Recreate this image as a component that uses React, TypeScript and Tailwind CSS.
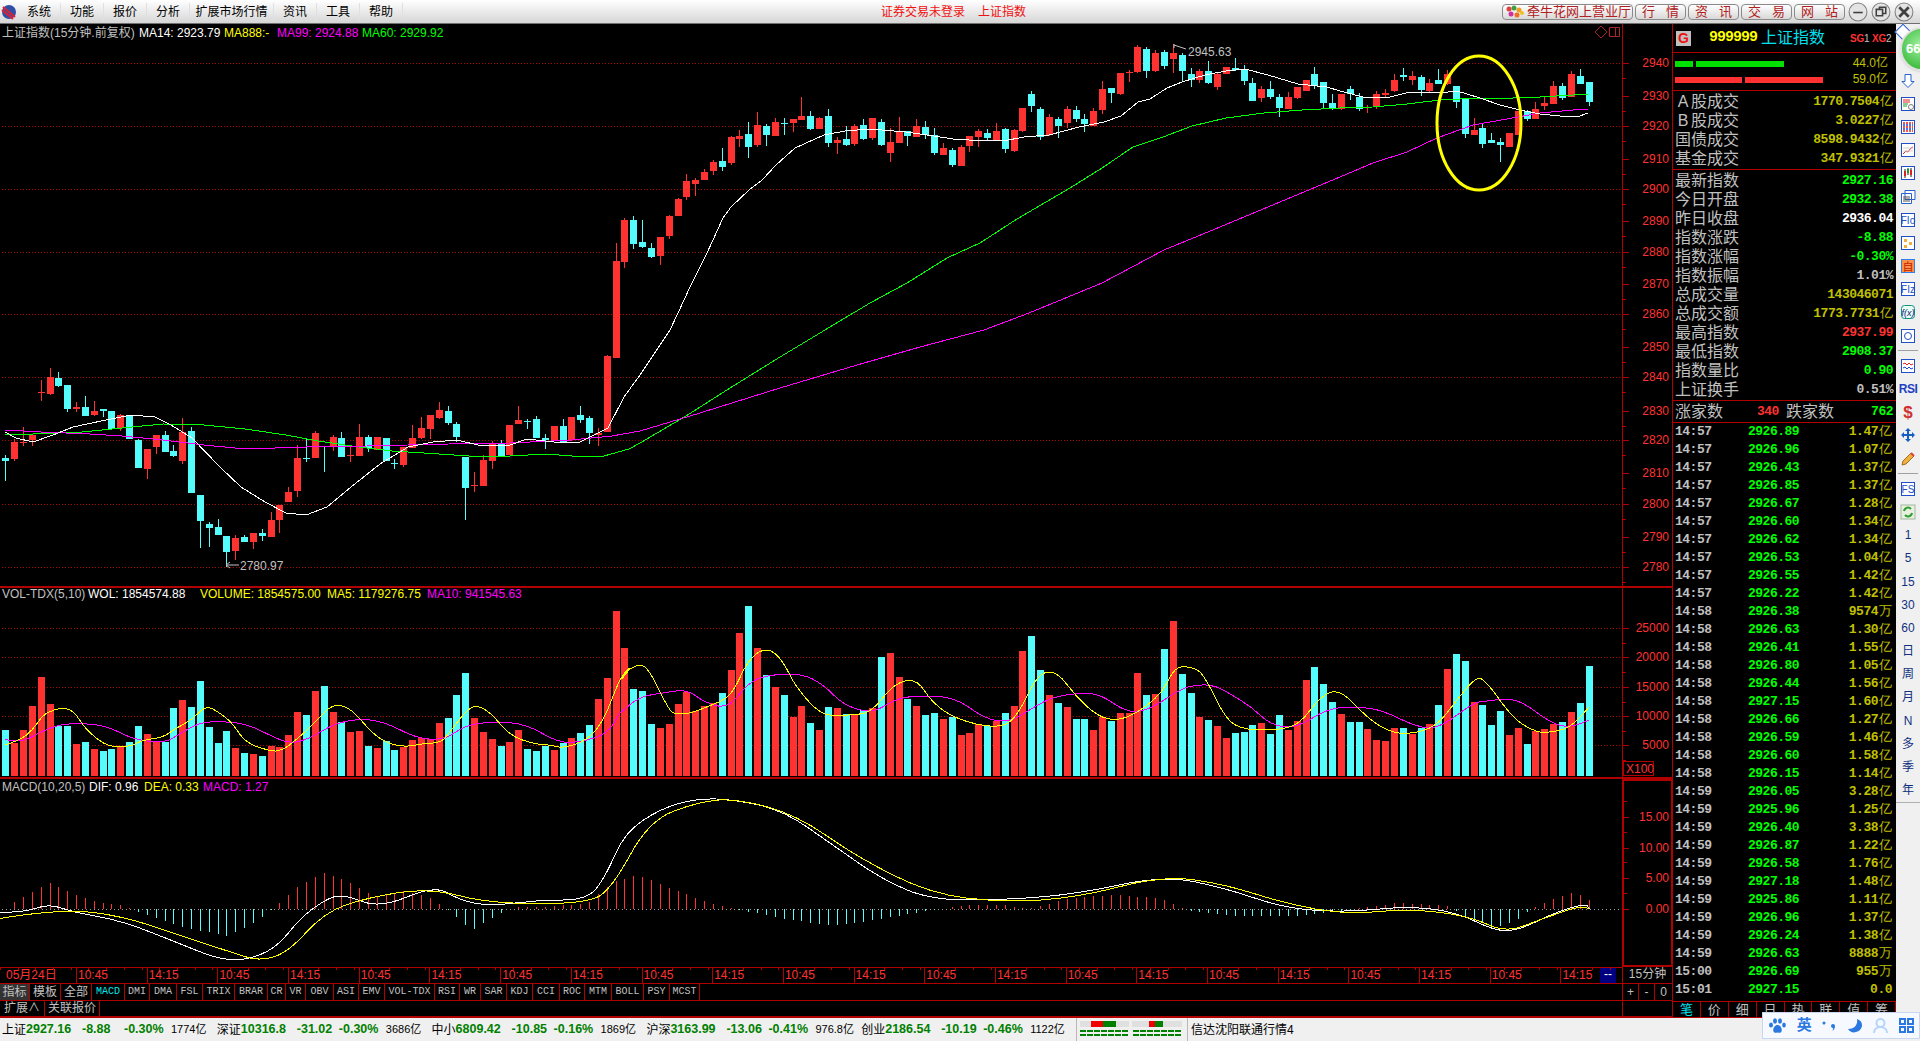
const sans = "font-['Liberation_Sans','Noto_Sans_CJK_SC',sans-serif]";

type Row = number[];
// [red?, bodyTop, bodyBottom, wickTop, wickBottom], measured on crops (y is 3x)
const rows7: Row[] = [
  [0,293,303,285,362],[1,246,297,238,302],[1,245,248,200,258],[1,225,241,222,258],[1,95,98,60,123],[1,51,103,24,105],
  [0,54,78,36,80],[0,75,148,75,156],[1,141,147,126,156],[0,141,168,108,168],[1,153,165,123,168],[0,147,153,147,172],
  [0,153,207,153,210],[1,165,203,162,213],[0,168,237,165,237],[0,240,324,237,324],[1,267,327,267,357],[1,225,261,225,282],
  [0,225,276,213,276],[0,273,288,255,291],[1,216,303,174,312],[0,213,399,201,399],[0,405,483,405,564],[0,492,504,486,561],
  [0,501,525,477,525],[0,528,576,528,621],[1,534,573,525,600],[0,531,546,525,546],[1,519,546,519,567],[0,519,528,507,543],
  [1,480,531,456,531],[1,435,480,435,519],[1,396,426,381,426],[1,294,393,255,411],[0,294,297,234,306],[1,219,294,213,294],
  [0,258,261,258,336],[1,231,258,225,273],[0,234,291,216,291],[1,285,287,255,306],[1,231,288,192,288],[0,231,264,225,276],
  [1,231,270,231,270],[0,234,303,234,303],[0,309,312,297,327],[1,261,315,261,321],[1,234,264,195,264],[1,204,234,171,237],
  [1,165,207,165,237],[1,150,174,126,177],[0,153,189,138,195],[0,192,231,186,246],[0,291,384,291,480],[1,375,378,336,396],
  [1,300,378,285,378],[1,252,303,243,327],[0,252,288,240,291],[1,195,285,195,285],[1,180,192,138,192],[0,183,186,177,207],
  [0,177,234,168,234],[0,234,240,222,267],[1,198,240,198,240],[0,198,249,177,249],[1,171,240,171,243],[0,165,180,138,189],
  [0,174,219,168,252],[1,219,225,204,258],[1,-12,216,-15,216],
];
const rows10: Row[] = [
  [1,393,684,339,684],[1,270,396,265,414],[0,270,342,258,357],[0,336,351,270,354],[0,354,381,339,384],[1,321,378,321,405],
  [1,258,318,255,327],[1,207,258,204,258],[1,153,201,132,210],[1,150,162,144,198],
];
const rows11: Row[] = [
  [1,396,420,388,420],[1,366,393,360,405],[0,363,381,324,393],[1,291,369,288,375],[1,288,297,270,321],[0,282,321,246,354],
  [1,255,315,216,321],[0,258,285,252,318],[1,246,288,234,288],[0,249,251,234,285],[1,237,249,237,276],[1,228,240,171,240],
  [0,228,267,213,270],[1,234,267,231,267],[0,228,309,207,321],[1,300,309,291,342],[0,297,315,258,318],[1,258,312,252,318],
  [0,255,297,237,300],[1,234,294,234,300],[0,246,315,237,318],[1,306,339,264,366],[1,276,309,231,309],[0,273,288,273,318],
  [1,258,291,237,291],[0,261,285,243,297],[0,285,339,264,345],[1,324,345,309,345],[0,330,375,324,381],[1,321,378,315,378],
  [1,288,318,288,336],[1,273,291,267,321],[0,279,294,267,300],[1,273,303,249,303],[0,267,327,264,339],[1,270,333,267,336],
  [1,204,273,204,276],[0,162,198,153,216],[0,207,291,201,300],[1,231,285,222,288],[0,237,258,231,294],[1,207,249,198,264],
  [0,210,237,198,246],[0,237,252,222,276],[1,213,258,204,258],[1,147,210,123,222],[0,144,159,144,189],[1,99,162,99,165],
  [1,97,100,90,126],[1,21,96,15,99],[0,27,93,21,114],[1,39,93,30,96],[0,36,78,30,87],[1,39,57,12,99],
  [0,45,93,39,123],[0,102,120,84,141],[1,93,120,87,129],[0,93,129,63,132],[1,102,141,96,150],[1,81,102,81,102],
  [0,84,90,54,93],[0,87,123,75,135],[0,129,183,114,183],[1,147,174,138,186],[0,147,171,123,177],[0,171,204,162,231],
  [1,171,207,156,207],[1,141,174,141,177],[1,120,153,120,153],[0,102,138,81,147],[0,126,189,126,207],[0,189,207,162,210],
];
const rows8: Row[] = [
  [1,192,237,192,240],[0,177,192,168,210],[0,202,237,190,243],[1,232,235,225,248],[1,192,232,183,237],[1,188,194,178,200],
  [1,150,183,132,186],[0,135,141,114,153],[1,138,150,123,165],[0,141,180,135,198],[1,159,183,147,186],[0,150,162,117,162],
  [1,132,162,120,165],[0,168,216,168,234],[0,204,312,204,324],[1,300,315,264,315],[0,294,342,279,354],[0,330,339,309,339],
  [0,336,345,324,396],[1,309,351,309,351],[1,243,315,243,315],[0,243,267,240,273],[1,237,267,216,267],[1,219,228,201,240],
  [1,168,222,153,222],[0,168,204,159,210],[1,132,201,123,201],[0,138,162,117,162],[0,156,216,156,228],
];
const toReal = (list: Row[], top: number) =>
  list.map(([r, a, b, w, v]) => ({ red: r === 1, top: top + a / 3, bottom: top + b / 3, high: top + w / 3, low: top + v / 3 }));
const candles = [...toReal(rows7, 360), ...toReal(rows10, 130), ...toReal(rows11, 40), ...toReal(rows8, 30)];

// volume bars: signed (red > 0), |v| = zoomed y of the top of the bar
const vol7 = [-450,490,450,378,291,372,-438,-438,492,-486,507,-513,-507,498,-486,-438,462,486,-486,-384,360,-381,-303,-441,-489,-453,504,-519,522,-528,498,501,465,396,-405,333,-318,396,-426,456,453,-498,504,-483,-510,501,480,474,477,429,-414,-345,-279,414,456,477,-498,486,450,-507,-513,-498,510,-489,474,-459,-435,357,294,93];
const vol12 = [144,-267,-273,-372,384,372,312,276,333,318,309,-279,210,99,-18,144,-225,261,-285,351,318,-369,390,-321,324,-342,345,-330,324,-171,159,231,-297,318,-345,-339,357,-351,405,399,372,-378,363,-339,318,153,-108,-210,285,-309,321,-357,-357,390,351,-363,339,339,219,-285,282,-147,63,-222,-279,351,-360,378,414,-399,-396,-375,369,-402,-345,390,363,240,-201,-252,-306,342,-366,-366,387,420,423,384,-384,402,-384,372,-315,207,-162,-183,306,-315,-375,-333,405,384,-432,393,387,372,-366,336,-309,-198];
const volumes = [
  ...vol7.map((v) => ({ red: v > 0, top: 580 + Math.abs(v) / 3 })),
  ...vol12.map((v) => ({ red: v > 0, top: 600 + Math.abs(v) / 3 })),
];
const barX = (i: number) => Math.round(5.3 + 8.845 * i);

const fromZ9 = (p: number[][]) => p.map(([x, y]) => [x / 2.45, 580 + y / 3]);
const fromZ12 = (p: number[][]) => p.map(([x, y]) => [620 + x / 1.568, 600 + y / 3]);
const shrunk = (p: number[][]) => p.map(([x, y]) => [x * 1.2245, y * 1.2245]);
const pts = (p: number[][]) => p.map(([x, y]) => `${x.toFixed(1)},${y.toFixed(1)}`).join(" ");
// rounds the corners of a hand-measured curve
const smooth = (p: number[][]) => {
  let d = `M${p[0][0].toFixed(1)} ${p[0][1].toFixed(1)}`;
  for (let i = 1; i < p.length - 1; i++) {
    const mx = (p[i][0] + p[i + 1][0]) / 2;
    const my = (p[i][1] + p[i + 1][1]) / 2;
    d += `Q${p[i][0].toFixed(1)} ${p[i][1].toFixed(1)} ${mx.toFixed(1)} ${my.toFixed(1)}`;
  }
  const last = p[p.length - 1];
  return `${d}L${last[0].toFixed(1)} ${last[1].toFixed(1)}`;
};

const ma14 = [[5,432],[16,438],[33,442],[53,435],[73,427],[106,420],[131,415],[155,417],[171,425],[192,438],[220,467],[241,487],[265,502],[286,513],[306,515],[327,507],[351,487],[380,464],[408,447],[433,442],[457,440],[482,446],[510,445],[527,439],[563,443],[580,442],[608,428],[624,397],[640,375],[670,330],[678,313],[690,287],[707,253],[723,218],[731,207],[749,190],[762,180],[776,165],[795,148],[824,135],[845,131],[870,129],[906,132],[927,135],[953,139],[969,140],[1003,141],[1024,137],[1049,135],[1079,127],[1104,122],[1121,116],[1138,102],[1150,99],[1167,88],[1182,82],[1205,75],[1226,71],[1245,69],[1268,75],[1298,84],[1327,87],[1340,91],[1367,98],[1390,97],[1410,92],[1440,93],[1457,91],[1480,98],[1500,105],[1520,110],[1540,114],[1560,116],[1577,117],[1588,113]];
const ma60 = [[5,435],[33,434],[82,432],[122,428],[163,424],[204,425],[245,429],[286,435],[318,441],[359,447],[392,451],[424,453],[469,456],[510,456],[547,454],[584,457],[604,456],[629,449],[640,443],[686,416],[730,388],[780,357],[825,330],[870,303],[907,283],[947,258],[980,243],[1017,219],[1070,188],[1102,168],[1133,147],[1163,137],[1192,126],[1226,118],[1264,113],[1302,110],[1340,108],[1373,107],[1407,104],[1440,100],[1480,98],[1513,98],[1540,97],[1573,95],[1588,94]];
const ma99 = [[5,430],[41,432],[90,434],[122,436],[163,440],[204,445],[245,449],[306,447],[367,446],[449,444],[510,443],[571,440],[612,436],[640,431],[700,413],[780,388],[857,365],[920,347],[984,330],[1029,313],[1102,283],[1164,250],[1220,227],[1340,177],[1373,163],[1407,152],[1437,138],[1473,125],[1507,119],[1540,113],[1573,110],[1588,109]];
const volMa5 = [
  ...fromZ9([[12,495],[50,480],[80,450],[105,405],[130,390],[160,382],[185,400],[205,440],[240,480],[270,500],[320,500],[350,480],[400,472],[430,445],[470,420],[505,375],[540,400],[570,430],[600,487],[660,513],[690,513],[730,475],[770,430],[815,370],[860,385],[905,450],[940,485],[990,502],[1040,490],[1080,488],[1100,460],[1140,395],[1165,375],[1200,395],[1250,468],[1310,492],[1350,495],[1380,505],[1440,480],[1480,420],[1520,290],[1550,255]]),
  ...fromZ12([[0,245],[10,210],[35,190],[50,225],[78,335],[90,343],[110,340],[140,318],[175,290],[200,180],[230,140],[255,180],[275,260],[315,345],[345,345],[370,345],[395,335],[430,250],[465,235],[490,310],[530,360],[590,385],[620,360],[655,220],[685,213],[715,290],[750,350],[780,362],[810,340],[850,280],[870,200],[895,200],[915,220],[950,360],[980,390],[1030,390],[1065,375],[1100,285],[1130,268],[1175,360],[1210,398],[1240,402],[1280,380],[1310,305],[1340,235],[1355,235],[1400,355],[1430,390],[1450,400],[1490,385],[1520,320]]),
];
const volMa10 = [
  ...fromZ9([[12,478],[50,490],[100,455],[150,432],[200,430],[260,437],[330,480],[400,488],[430,470],[490,425],[560,425],[610,435],[660,465],[710,492],[760,475],[820,430],[890,415],[950,430],[1020,475],[1090,480],[1140,435],[1210,425],[1290,432],[1370,490],[1430,485],[1490,460],[1520,395]]),
  ...fromZ12([[0,340],[30,290],[70,278],[105,268],[135,310],[170,325],[200,250],[230,225],[285,220],[320,255],[350,315],[395,340],[430,300],[460,287],[525,290],[570,355],[610,368],[650,320],[680,290],[725,278],[755,285],[795,338],[830,330],[880,265],[910,253],[935,258],[955,280],[990,320],[1020,375],[1060,385],[1110,325],[1155,320],[1195,330],[1250,382],[1285,385],[1340,305],[1365,303],[1385,295],[1415,305],[1460,370],[1490,383],[1520,360]]),
];
const dif = shrunk([[0,745],[20,745],[40,738],[60,745],[100,752],[150,772],[175,782],[198,785],[225,775],[245,750],[265,735],[280,730],[310,742],[355,723],[375,735],[400,740],[440,735],[480,735],[495,715],[510,680],[540,660],[570,652],[600,653],[640,662],[680,690],[720,718],[760,735],[820,735],[880,730],[950,715],[1000,725],[1050,742],[1100,745],[1150,740],[1190,745],[1220,760],[1240,760],[1270,745],[1295,738],[1298,742]]);
const dea = shrunk([[0,750],[50,742],[100,748],[150,765],[190,778],[212,785],[235,778],[265,745],[300,733],[350,725],[400,738],[480,738],[500,725],[530,670],[570,655],[600,652],[650,665],[700,700],[760,730],[820,737],[880,733],[950,715],[1000,722],[1050,738],[1100,747],[1150,742],[1200,748],[1230,762],[1260,750],[1290,740],[1298,742]]);
// histogram envelope: shrunk x, height in shrunk px
const histo = [[0,-3],[15,8],[40,22],[60,12],[80,5],[100,3],[120,-5],[150,-15],[185,-22],[210,-10],[225,2],[245,20],[265,30],[285,22],[305,10],[330,15],[350,10],[365,0],[385,-18],[400,-8],[420,2],[450,2],[480,5],[500,22],[520,28],[540,20],[560,12],[585,3],[605,-1],[640,-8],[680,-14],[720,-8],[760,-1],[790,3],[820,3],[840,0],[870,8],[910,12],[950,8],[970,-1],[1010,-6],[1060,-6],[1100,-1],[1140,5],[1180,3],[1195,-5],[1220,-16],[1240,-8],[1255,3],[1285,14],[1300,6]];
const histoAt = (x: number) => {
  const s = x / 1.2245;
  for (let k = 1; k < histo.length; k++) {
    if (s <= histo[k][0]) {
      const [x0, y0] = histo[k - 1];
      const [x1, y1] = histo[k];
      return (y0 + ((s - x0) / (x1 - x0)) * (y1 - y0)) * 1.2245;
    }
  }
  return 0;
};

const RED = "#ff3232";
const CYAN = "#54fcfc";
const LINE = "#b00000";

const priceLabels = [[2940,62.5],[2930,95.7],[2920,125.7],[2910,158.7],[2900,189],[2890,221],[2880,252],[2870,284],[2860,314],[2850,347],[2840,377],[2830,411],[2820,440],[2810,473],[2800,504],[2790,537],[2780,567]];
const priceGrid = [62.5, 125.7, 189, 251.5, 314, 377, 440, 504, 567];
const volLabels = [[25000,628],[20000,657],[15000,687],[10000,716],[5000,745]];
const macdLabels: [string, number][] = [["15.00",817],["10.00",848],["5.00",878],["0.00",909]];

function AxisText({ y, children }: { y: number; children: React.ReactNode }) {
  return <text x={1669} y={y + 4} textAnchor="end" fontSize={12} fill={RED}>{children}</text>;
}

function PriceChart() {
  return (
    <svg width={1672} height={564} viewBox="0 24 1672 564" className="block">
      {priceGrid.map((y) => (
        <line key={y} x1={2} x2={1622} y1={Math.round(y) + 0.5} y2={Math.round(y) + 0.5} stroke="#b00000" strokeDasharray="1 2" />
      ))}
      <g shapeRendering="crispEdges">
        {candles.map((c, i) => {
          const x = barX(i);
          const fill = c.red ? RED : CYAN;
          return (
            <g key={i} fill={fill}>
              <rect x={x} y={c.high} width={1} height={c.low - c.high} />
              <rect x={x - 3} y={c.top} width={7} height={Math.max(1, c.bottom - c.top)} />
            </g>
          );
        })}
        <polyline points={pts(ma60)} fill="none" stroke="#00ff00" />
        <polyline points={pts(ma99)} fill="none" stroke="#ff00ff" />
        <polyline points={pts(ma14)} fill="none" stroke="#ffffff" />
      </g>
      <ellipse cx={1479} cy={123} rx={42} ry={67} fill="none" stroke="#ffff00" strokeWidth={3} />
      <g fill="none" stroke="#c0c0c0">
        <path d="M1174 44v4M1174 45l12 4" />
        <path d="M226 565h13M226 565l4-3M226 565l4 3" />
      </g>
      <text x={1188} y={56} fontSize={12} fill="#c0c0c0">2945.63</text>
      <text x={240} y={570} fontSize={12} fill="#c0c0c0">2780.97</text>
      <g fill="none" stroke="#a82828">
        <path d="M1601 26l6 6-6 6-6-6z" />
        <path d="M1609.5 27.5h10v9h-10zM1615.5 27.5v9" />
      </g>
      <line x1={1622.5} x2={1622.5} y1={24} y2={588} stroke={LINE} />
      {priceLabels.map(([v, y]) => (
        <g key={v}>
          <line x1={1622} x2={1629} y1={Math.round(y) + 0.5} y2={Math.round(y) + 0.5} stroke={LINE} />
          <line x1={1622} x2={1626} y1={Math.round(y + 15) + 0.5} y2={Math.round(y + 15) + 0.5} stroke={LINE} />
          <AxisText y={y}>{v}</AxisText>
        </g>
      ))}
    </svg>
  );
}

function VolumeChart() {
  return (
    <svg width={1672} height={191} viewBox="0 588 1672 191" className="block">
      {volLabels.map(([v, y]) => (
        <line key={v} x1={2} x2={1622} y1={y + 0.5} y2={y + 0.5} stroke="#b00000" strokeDasharray="1 2" />
      ))}
      <g shapeRendering="crispEdges">
        {volumes.map((b, i) => (
          <rect key={i} x={barX(i) - 3} y={b.top} width={7} height={776 - b.top} fill={b.red ? RED : CYAN} />
        ))}
        <path d={smooth(volMa10)} fill="none" stroke="#ff00ff" />
        <path d={smooth(volMa5)} fill="none" stroke="#ffff00" />
      </g>
      <line x1={1622.5} x2={1622.5} y1={588} y2={779} stroke={LINE} />
      {volLabels.map(([v, y]) => (
        <g key={v}>
          <line x1={1622} x2={1629} y1={y + 0.5} y2={y + 0.5} stroke={LINE} />
          <line x1={1622} x2={1626} y1={y + 15.5} y2={y + 15.5} stroke={LINE} />
          <AxisText y={y}>{v}</AxisText>
        </g>
      ))}
      <rect x={1623.5} y={761.5} width={30} height={14} fill="#000" stroke={LINE} />
      <text x={1626} y={773} fontSize={12} fill={RED}>X100</text>
    </svg>
  );
}

function MacdChart() {
  return (
    <svg width={1672} height={188} viewBox="0 779 1672 188" className="block">
      <line x1={2} x2={1622} y1={909.5} y2={909.5} stroke="#a0a0a0" strokeDasharray="1 3" />
      <g shapeRendering="crispEdges">
        {candles.map((_, i) => {
          const x = barX(i);
          const h = histoAt(x);
          return <line key={i} x1={x + 0.5} x2={x + 0.5} y1={909} y2={909 - h} stroke={h > 0 ? RED : CYAN} />;
        })}
        <path d={smooth(dif)} fill="none" stroke="#ffffff" />
        <path d={smooth(dea)} fill="none" stroke="#ffff00" />
      </g>
      <rect x={1623} y={780} width={49} height={186} fill="none" stroke={LINE} strokeWidth={2} />
      {macdLabels.map(([v, y]) => (
        <g key={v}>
          <line x1={1624} x2={1629} y1={y + 0.5} y2={y + 0.5} stroke={LINE} />
          <line x1={1624} x2={1627} y1={y - 15.5} y2={y - 15.5} stroke={LINE} />
          <AxisText y={y}>{v}</AxisText>
        </g>
      ))}
    </svg>
  );
}

const timeLabels = Array.from({ length: 21 }, (_, i) => (i % 2 === 0 ? "10:45" : "14:15"));
const tabs = [
  ["MACD", "w-[33px]"], ["DMI", "w-[25px]"], ["DMA", "w-[27px]"], ["FSL", "w-[26px]"], ["TRIX", "w-[32px]"], ["BRAR", "w-[33px]"],
  ["CR", "w-[18px]"], ["VR", "w-[20px]"], ["OBV", "w-[28px]"], ["ASI", "w-[25px]"], ["EMV", "w-[26px]"], ["VOL-TDX", "w-[50px]"],
  ["RSI", "w-[25px]"], ["WR", "w-[21px]"], ["SAR", "w-[26px]"], ["KDJ", "w-[26px]"], ["CCI", "w-[27px]"], ["ROC", "w-[25px]"],
  ["MTM", "w-[27px]"], ["BOLL", "w-[32px]"], ["PSY", "w-[26px]"], ["MCST", "w-[30px]"],
];

function BottomRows() {
  return (
    <div className="flex h-[51px] w-[1672px]">
      <div className="flex w-[1622px] flex-col">
        <div className="relative flex h-[16px] border-t border-[#b00000] text-[12px] leading-[15px] text-[#ff3232]">
          <div className="absolute inset-x-0 top-0 h-[2px] bg-[repeating-linear-gradient(90deg,#b00000_0_1px,transparent_1px_17.69px)]" />
          <div className="w-[76px] pl-[6px]">05月24日</div>
          {timeLabels.map((t, i) => (
            <div key={i} className="w-[70.7px] border-l border-[#b00000] pl-[1px]">{t}</div>
          ))}
          <div className="flex-1 border-l border-[#b00000] pl-[1px]">14:15</div>
          <div className="w-[16px] bg-[#000080] text-center leading-[13px] text-white">--</div>
          <div className="w-[6px]" />
        </div>
        <div className="flex h-[17px] border-t border-[#b00000] text-[12px] leading-[16px] text-[#c0c0c0]">
          <div className="w-[30px] border-r border-[#b00000] bg-[#333333] text-center">指标</div>
          <div className="w-[31px] border-r border-[#b00000] text-center">模板</div>
          <div className="w-[31px] border-r border-[#b00000] text-center">全部</div>
          {tabs.map(([t, w], i) => (
            <div
              key={t}
              className={`${w} border-r border-[#b00000] text-center font-['Liberation_Mono',monospace] text-[10px] ${i === 0 ? "text-[#00e8e8]" : ""}`}
            >
              {t}
            </div>
          ))}
        </div>
        <div className="flex h-[18px] border-t border-b-2 border-[#b00000] text-[12px] leading-[15px] text-[#c0c0c0]">
          <div className="w-[45px] border-r border-[#b00000] text-center">扩展∧</div>
          <div className="w-[55px] border-r border-[#b00000] text-center">关联报价</div>
        </div>
      </div>
      <div className="flex w-[50px] flex-col border-l border-[#b00000] text-[12px] text-[#c0c0c0]">
        <div className="h-[16px] text-center leading-[15px]">15分钟</div>
        <div className="flex h-[17px] border-t border-[#b00000] leading-[16px]">
          <div className="w-[16px] border-r border-[#b00000] text-center">+</div>
          <div className="w-[16px] border-r border-[#b00000] text-center">-</div>
          <div className="flex-1 text-center">0</div>
        </div>
        <div className="h-[18px] border-t border-b-2 border-[#b00000]" />
      </div>
    </div>
  );
}

const Yi = ({ unit = "亿" }: { unit?: string }) => <span className="ml-px text-[13px] font-normal tracking-normal">{unit}</span>;

const summary: [React.ReactNode, string, string][] = [
  ["最新指数", "2927.16", "text-[#00ff00]"],
  ["今日开盘", "2932.38", "text-[#00ff00]"],
  ["昨日收盘", "2936.04", "text-white"],
  ["指数涨跌", "-8.88", "text-[#00ff00]"],
  ["指数涨幅", "-0.30%", "text-[#00ff00]"],
  ["指数振幅", "1.01%", "text-[#c0c0c0]"],
  ["总成交量", "143046071", "text-[#c0c000]"],
  ["总成交额", "1773.7731亿", "text-[#c0c000]"],
  ["最高指数", "2937.99", "text-[#ff3232]"],
  ["最低指数", "2908.37", "text-[#00ff00]"],
  ["指数量比", "0.90", "text-[#00ff00]"],
  ["上证换手", "0.51%", "text-[#c0c0c0]"],
];

const ticks: [string, string, string, string?][] = [
  ["14:57","2926.89","1.47"],["14:57","2926.96","1.07"],["14:57","2926.43","1.37"],["14:57","2926.85","1.37"],["14:57","2926.67","1.28"],
  ["14:57","2926.60","1.34"],["14:57","2926.62","1.34"],["14:57","2926.53","1.04"],["14:57","2926.55","1.42"],["14:57","2926.22","1.42"],
  ["14:58","2926.38","9574","万"],["14:58","2926.63","1.30"],["14:58","2926.41","1.55"],["14:58","2926.80","1.05"],["14:58","2926.44","1.56"],
  ["14:58","2927.15","1.60"],["14:58","2926.66","1.27"],["14:58","2926.59","1.46"],["14:58","2926.60","1.58"],["14:58","2926.15","1.14"],
  ["14:59","2926.05","3.28"],["14:59","2925.96","1.25"],["14:59","2926.40","3.38"],["14:59","2926.87","1.22"],["14:59","2926.58","1.76"],
  ["14:59","2927.18","1.48"],["14:59","2925.86","1.11"],["14:59","2926.96","1.37"],["14:59","2926.24","1.38"],["14:59","2926.63","8888","万"],
  ["15:00","2926.69","955","万"],["15:01","2927.15","0.0",""],
];

const num = "font-['Liberation_Mono',monospace] font-bold text-[13px] tracking-[-0.5px]";

function InfoPanel() {
  return (
    <div className="flex h-[994px] w-[224px] flex-col border-l border-[#b00000] text-[#c0c0c0]">
      <div className="flex h-[29px] shrink-0 items-center whitespace-nowrap border-b border-[#b00000] pl-[3px]">
        <div className="flex h-[15px] w-[15px] shrink-0 items-center justify-center bg-[#c0c0c0] text-[14px] font-bold text-[#f01010]">G</div>
        <div className="ml-[18px] shrink-0 font-['Liberation_Mono',monospace] text-[15px] font-bold tracking-[-1px] text-[#ffff00]">999999</div>
        <div className="ml-[4px] shrink-0 text-[16px] text-[#00e0f0]">上证指数</div>
        <div className="ml-[25px] shrink-0 text-[10px] tracking-[-0.2px] text-[#c0c0c0]">
          <b className="text-[#ff3232]">SG</b>1 <b className="text-[#ff3232]">XG</b>2
        </div>
      </div>
      <div className="flex h-[38px] shrink-0 flex-col justify-center gap-[1px] border-b border-[#b00000] pl-[2px] pr-[8px] text-[12px] leading-[15px] text-[#c0c000]">
        <div className="flex items-center">
          <div className="h-[6px] w-[18px] bg-[#00e000]" />
          <div className="ml-[3px] h-[6px] w-[88px] bg-[#00e000]" />
          <div className="ml-auto">44.0亿</div>
        </div>
        <div className="flex items-center">
          <div className="h-[6px] w-[67px] bg-[#ff3232]" />
          <div className="ml-[3px] h-[6px] w-[78px] bg-[#ff3232]" />
          <div className="ml-auto">59.0亿</div>
        </div>
      </div>
      <div className="h-[79px] shrink-0 border-b border-[#b00000] pl-[2px] pr-[3px] pt-[1px]">
        {([
          [<span key="a"><span className="inline-block w-[16px] text-center">A</span>股成交</span>, "1770.7504"],
          [<span key="b"><span className="inline-block w-[16px] text-center">B</span>股成交</span>, "3.0227"],
          ["国债成交", "8598.9432"],
          ["基金成交", "347.9321"],
        ] as [React.ReactNode, string][]).map(([k, v]) => (
          <div key={v} className="flex h-[19px] items-center justify-between text-[16px] leading-[19px]">
            <span>{k}</span>
            <span className={`text-[#c0c000] ${num}`}>{v}<Yi /></span>
          </div>
        ))}
      </div>
      <div className="h-[231px] shrink-0 border-b border-[#b00000] pl-[2px] pr-[3px] pt-[1px]">
        {summary.map(([k, v, c]) => {
          const yi = v.endsWith("亿");
          return (
            <div key={String(k)} className="flex h-[19px] items-center justify-between text-[16px] leading-[19px]">
              <span>{k}</span>
              <span className={`${c} ${num}`}>{yi ? v.slice(0, -1) : v}{yi && <Yi />}</span>
            </div>
          );
        })}
      </div>
      <div className="flex h-[22px] shrink-0 items-center border-b border-[#b00000] pl-[2px] pr-[3px] text-[16px]">
        <span>涨家数</span>
        <span className={`ml-[34px] text-[#ff3232] ${num}`}>340</span>
        <span className="ml-[7px]">跌家数</span>
        <span className={`ml-auto text-[#00ff00] ${num}`}>762</span>
      </div>
      <div className="h-[578px] shrink-0 pl-[2px] pr-[4px]">
        {ticks.map(([t, p, v, u], i) => (
          <div key={i} className={`flex h-[18px] items-center ${num}`}>
            <span className="w-[73px]">{t}</span>
            <span className="w-[60px] text-[#00ff00]">{p}</span>
            <span className="ml-auto text-[#c0c000]">{v}{u !== "" && <Yi unit={u ?? "亿"} />}</span>
          </div>
        ))}
      </div>
      <div className="flex h-[17px] shrink-0 border-y border-[#b00000] text-[13px] leading-[15px]">
        {"笔价细日热联值筹".split("").map((c, i) => (
          <div key={c} className={`w-[28px] border-r border-[#b00000] text-center ${i === 0 ? "text-[#00e0f0]" : ""}`}>{c}</div>
        ))}
      </div>
    </div>
  );
}

function Frame({ children, color = "#2050c8" }: { children: React.ReactNode; color?: string }) {
  return (
    <svg width={16} height={16} viewBox="0 0 16 16">
      <rect x={1.5} y={1.5} width={13} height={13} fill="#fff" stroke={color} />
      {children}
    </svg>
  );
}

const tools: React.ReactNode[] = [
  <svg key="d" width={14} height={16} viewBox="0 0 14 16" fill="#fff" stroke="#2860d0"><path d="M4 1.5h6v7h3l-6 6-6-6h3z" /></svg>,
  <Frame key="list"><path d="M3 4h7M3 6h7" stroke="#e02020" /><path d="M3 8h5M3 10h4" stroke="#10a030" /><circle cx={11} cy={11} r={2.5} fill="#fff" stroke="#808080" /></Frame>,
  <Frame key="grid"><path d="M3 4h10M3 8h10M3 12h10" stroke="#e02020" strokeWidth={1.5} strokeDasharray="2 1" /><path d="M3 6h10M3 10h10" stroke="#2040e0" strokeWidth={1.5} strokeDasharray="2 1" /></Frame>,
  <Frame key="line"><path d="M3 12l3-3 2 1 3-4 2-1" fill="none" stroke="#e02020" /><path d="M3 6h10M3 9h10" stroke="#d0d0d0" /></Frame>,
  <Frame key="candle"><path d="M5 4v9M8 3v7M11 3v9" stroke="#202020" /><rect x={4} y={6} width={2} height={5} fill="#e02020" /><rect x={7} y={4} width={2} height={4} fill="#10a030" /><rect x={10} y={5} width={2} height={5} fill="#e02020" /></Frame>,
  <svg key="win" width={16} height={16} viewBox="0 0 16 16" fill="#fff" stroke="#2860d0"><path d="M5 1.5h10v9H5zM1.5 4.5h10v10h-10z" /><path d="M3 8h7M3 10h7M3 12h7" stroke="#505050" /></svg>,
  <Frame key="fio"><text x={8} y={12} textAnchor="middle" fontSize={10} fill="#2050c8">FIo</text></Frame>,
  <Frame key="tree"><rect x={4} y={4} width={3} height={3} fill="#f0b040" /><rect x={9} y={7} width={3} height={3} fill="#f0b040" /><rect x={4} y={10} width={3} height={3} fill="#f0b040" /></Frame>,
  <Frame key="self" color="#3080f0"><rect x={2} y={2} width={12} height={12} fill="#ff9048" /><text x={8} y={12.5} textAnchor="middle" fontSize={11} fill="#c02000">自</text></Frame>,
  <Frame key="fiz"><text x={8} y={12} textAnchor="middle" fontSize={10} fill="#2050c8">FIz</text></Frame>,
  <svg key="fx" width={16} height={16} viewBox="0 0 16 16"><rect x={1.5} y={1.5} width={13} height={13} rx={3} fill="#e8fff4" stroke="#109080" /><text x={8} y={12} textAnchor="middle" fontSize={9} fontStyle="italic" fill="#102080">f(x)</text></svg>,
  <Frame key="circle"><circle cx={8} cy={8} r={3.5} fill="none" stroke="#2050c8" /></Frame>,
];
const tools2: React.ReactNode[] = [
  <Frame key="wave"><path d="M3 6l2-1 2 2 2-2 2 2 2-1" fill="none" stroke="#e02020" /><path d="M3 10l2-1 2 2 2-2 2 2 2-1" fill="none" stroke="#2040e0" /></Frame>,
  <span key="rsi" className="text-[12px] font-bold tracking-[-0.5px] text-[#2040c0]">RSI</span>,
  <span key="s" className="text-[17px] font-bold leading-none text-[#d03030]">$</span>,
  <svg key="move" width={16} height={16} viewBox="0 0 16 16" fill="#1860c0"><path d="M8 1l3 3H9v3h3V5l3 3-3 3V9H9v3h2l-3 3-3-3h2V9H4v2L1 8l3-3v2h3V4H5z" /></svg>,
  <svg key="pencil" width={16} height={16} viewBox="0 0 16 16"><path d="M2 14l1-4 8-8 3 3-8 8z" fill="#f0b040" stroke="#a07020" /><path d="M11 2l3 3" stroke="#e04040" strokeWidth={2} /></svg>,
];
const tools3: React.ReactNode[] = [
  <Frame key="fs"><text x={8} y={12} textAnchor="middle" fontSize={10} fill="#2050c8">FS</text></Frame>,
  <svg key="sync" width={16} height={16} viewBox="0 0 16 16" fill="none" stroke="#30a030" strokeWidth={2}><rect x={1} y={1} width={14} height={14} fill="#e8f0e0" stroke="#a0b8a0" strokeWidth={1} /><path d="M4 7a4 4 0 017-2M12 9a4 4 0 01-7 2" /></svg>,
];
const periods = ["1", "5", "15", "30", "60", "日", "周", "月", "N", "多", "季", "年"];

function Toolbar() {
  const item = "flex h-[23.2px] items-center justify-center";
  return (
    <div className="relative flex h-[994px] w-[24px] flex-col bg-[#f0f0f0]">
      <div className="absolute left-[1px] top-[2px] h-[12px] w-[12px] rotate-45 border border-[#2860d0] bg-white" />
      <div className="absolute left-[4px] top-[3px] flex h-[44px] w-[44px] items-center rounded-full border-2 border-[#e0e0e0] bg-[radial-gradient(circle_at_45%_40%,#a0f0a0,#18a818)] pl-[4px] text-[13px] font-bold text-white shadow">
        66
      </div>
      <div className="h-[45px] shrink-0" />
      {tools.map((t, i) => <div key={i} className={item}>{t}</div>)}
      <div className="mx-[2px] flex h-[7px] shrink-0 items-center"><div className="h-px w-full bg-[#a0a0a0]" /></div>
      {tools2.map((t, i) => <div key={i} className={item}>{t}</div>)}
      <div className="mx-[2px] flex h-[7px] shrink-0 items-center"><div className="h-px w-full bg-[#a0a0a0]" /></div>
      {tools3.map((t, i) => <div key={i} className={item}>{t}</div>)}
      {periods.map((p) => <div key={p} className={`${item} text-[12px] text-[#103080]`}>{p}</div>)}
      <div className="h-px bg-[#b0b0b0]" />
    </div>
  );
}

function TitleBar() {
  const btn = "flex h-[16px] items-center rounded-[4px] border border-[#8a8a8a] bg-gradient-to-b from-white to-[#d8d8d8] text-[13px] text-[#b02020]";
  return (
    <div className="flex h-[24px] items-center border-b border-[#707070] bg-gradient-to-b from-white to-[#d6d6d6] text-[12px] text-black">
      <svg width={18} height={18} viewBox="0 0 18 18" className="shrink-0">
        <circle cx={9} cy={9} r={7} fill="#3050a8" />
        <path d="M3 4l12 10M2 7l11 9" stroke="#e02030" strokeWidth={2} />
      </svg>
      {["系统", "功能", "报价", "分析", "扩展市场行情", "资讯", "工具", "帮助"].map((m) => (
        <div key={m} className={`${m.length > 2 ? "w-[84px]" : "w-[43px]"} border-r border-[#e0e0e0] text-center`}>{m}</div>
      ))}
      <div className="ml-[478px] text-[#f01010]">证券交易未登录</div>
      <div className="ml-[13px] text-[#f01010]">上证指数</div>
      <div className="ml-auto flex items-center gap-[2px] pr-[6px]">
        <div className={`${btn} w-[131px] pl-[2px]`}>
          <svg width={20} height={14} viewBox="0 0 20 14" className="mr-[2px] shrink-0">
            <circle cx={4} cy={4} r={2.5} fill="#e04040" /><circle cx={9} cy={3} r={2.5} fill="#40a040" /><circle cx={14} cy={5} r={2.5} fill="#f0a020" />
            <circle cx={6} cy={9} r={2.5} fill="#d030a0" /><circle cx={12} cy={10} r={2.5} fill="#f07020" /><circle cx={17} cy={8} r={2} fill="#f0c020" />
          </svg>
          牵牛花网上营业厅
        </div>
        {[["行", "情"], ["资", "讯"], ["交", "易"], ["网", "站"]].map(([a, b]) => (
          <div key={a} className={`${btn} w-[51px] justify-between px-[6px]`}><span>{a}</span><span>{b}</span></div>
        ))}
        {["M5 10h9", "M5 7h6v6H5zM8 7V5h6v6h-3", "M5 5l9 9M14 5l-9 9"].map((d) => (
          <svg key={d} width={20} height={20} viewBox="0 0 19 19" className="ml-[1px]">
            <circle cx={9.5} cy={9.5} r={8.5} fill="#e4e4e4" stroke="#808080" />
            <path d={d} fill="none" stroke="#404040" strokeWidth={d.includes("l9") ? 2.5 : 1.5} />
          </svg>
        ))}
      </div>
    </div>
  );
}

const quotes = [
  ["上证", "2927.16", "-8.88", "-0.30%", "1774亿"],
  ["深证", "10316.8", "-31.02", "-0.30%", "3686亿"],
  ["中小", "6809.42", "-10.85", "-0.16%", "1869亿"],
  ["沪深", "3163.99", "-13.06", "-0.41%", "976.8亿"],
  ["创业", "2186.54", "-10.19", "-0.46%", "1122亿"],
];

function MiniBars() {
  const dots = Array.from({ length: 7 }, (_, i) => i);
  return (
    <svg width={104} height={18} viewBox="0 0 104 18" className="mx-[3px] shrink-0" shapeRendering="crispEdges">
      <rect x={0} y={0} width={49} height={6} fill="#e0e0e0" />
      <rect x={11} y={0} width={12} height={6} fill="#f00000" />
      <rect x={23} y={0} width={13} height={6} fill="#008000" />
      <rect x={52} y={0} width={50} height={6} fill="#e0e0e0" />
      <rect x={69} y={0} width={6} height={6} fill="#f00000" />
      <rect x={75} y={0} width={8} height={6} fill="#008000" />
      {dots.map((i) => (
        <g key={i} fill="#008000">
          <rect x={i * 7} y={9} width={6} height={2} /><rect x={i * 7} y={13} width={6} height={2} />
          <rect x={53 + i * 7} y={9} width={6} height={2} /><rect x={53 + i * 7} y={13} width={6} height={2} />
        </g>
      ))}
    </svg>
  );
}

function StatusBar() {
  return (
    <div className="flex h-[23px] items-center bg-[#f0f0f0] pl-[2px] text-[12px] text-black">
      {quotes.map(([n, p, c, r, a]) => (
        <div key={n} className="flex w-[214.8px] shrink-0 items-center whitespace-nowrap">
          <span className="w-[24px]">{n}</span>
          <span className="w-[56px] text-[12.5px] font-bold text-[#008000]">{p}</span>
          <span className="w-[42px] text-[12.5px] font-bold text-[#008000]">{c}</span>
          <span className="w-[47px] text-[12.5px] font-bold text-[#008000]">{r}</span>
          <span className="text-[11px]">{a}</span>
        </div>
      ))}
      <div className="flex h-full items-center border-x border-[#b8b8b8]"><MiniBars /></div>
      <span className="ml-[3px]">信达沈阳联通行情4</span>
    </div>
  );
}

function ImeBar() {
  return (
    <div className="absolute left-[1762px] top-[1012px] flex h-[27px] w-[158px] items-center justify-around border border-[#c8d6f0] bg-[#f6f9ff] text-[#2a78e0]">
      <svg width={18} height={16} viewBox="0 0 18 16" fill="#2a78e0">
        <ellipse cx={3} cy={7} rx={2} ry={2.5} /><ellipse cx={7} cy={3} rx={2} ry={2.7} /><ellipse cx={12} cy={3} rx={2} ry={2.7} /><ellipse cx={16} cy={7} rx={1.8} ry={2.5} />
        <path d="M9.5 7c3 0 5 4 4 6.500-1 2-2.500 1-4 1s-3 1-4-1c-1-2.500 1-6.500 4-6.500z" />
      </svg>
      <span className="text-[15px] font-bold">英</span>
      <svg width={14} height={12} viewBox="0 0 14 12" fill="#2a78e0"><circle cx={2} cy={3} r={1.500} /><path d="M9 6a2 2 0 014 0c0 2-1 4-3 5 1-1 1-2 1-3a2 2 0 01-2-2z" /></svg>
      <svg width={16} height={16} viewBox="0 0 16 16" fill="#2a78e0"><path d="M10 1c1 5-2 10-9 10 2 3 5 4 8 3 4-1 6-4 6-7 0-3-2-5-5-6z" /></svg>
      <svg width={15} height={16} viewBox="0 0 15 16" fill="none" stroke="#b8d4f8" strokeWidth={2}><circle cx={7.500} cy={5} r={4} /><path d="M1 15c0-4 3-6 6.500-6s6.500 2 6.500 6" /></svg>
      <svg width={15} height={15} viewBox="0 0 15 15" fill="none" stroke="#2a78e0" strokeWidth={2}><rect x={1} y={1} width={5} height={5} /><rect x={9} y={1} width={5} height={5} /><rect x={1} y={9} width={5} height={5} /><rect x={9} y={9} width={5} height={5} /></svg>
    </div>
  );
}

export default function App() {
  const head = "absolute left-[2px] flex h-[13px] whitespace-nowrap text-[12px] leading-[13px]";
  return (
    <div className={`relative h-[1041px] w-[1920px] overflow-hidden bg-black ${sans}`}>
      <TitleBar />
      <div className="flex h-[994px]">
        <div className="flex w-[1672px] flex-col">
          <div className="relative h-[564px] overflow-hidden border-b-2 border-[#b00000]">
            <PriceChart />
            <div className={`${head} top-[3px]`}>
              <span className="w-[137px] text-[#c0c0c0]">上证指数(15分钟.前复权)</span>
              <span className="w-[85px] text-white">MA14: 2923.79</span>
              <span className="w-[53px] text-[#ffff00]">MA888:-</span>
              <span className="w-[85px] text-[#ff00ff]">MA99: 2924.88</span>
              <span className="text-[#00ff00]">MA60: 2929.92</span>
            </div>
          </div>
          <div className="relative h-[191px] overflow-hidden border-b-2 border-[#b00000]">
            <VolumeChart />
            <div className={`${head} top-0`}>
              <span className="w-[86px] text-[#c0c0c0]">VOL-TDX(5,10)</span>
              <span className="w-[112px] text-white">WOL: 1854574.88</span>
              <span className="w-[127px] text-[#ffff00]">VOLUME: 1854575.00</span>
              <span className="w-[100px] text-[#ffff00]">MA5: 1179276.75</span>
              <span className="text-[#ff00ff]">MA10: 941545.63</span>
            </div>
          </div>
          <div className="relative h-[188px] overflow-hidden">
            <MacdChart />
            <div className={`${head} top-[2px]`}>
              <span className="w-[87px] text-[#c0c0c0]">MACD(10,20,5)</span>
              <span className="w-[55px] text-white">DIF: 0.96</span>
              <span className="w-[59px] text-[#ffff00]">DEA: 0.33</span>
              <span className="text-[#ff00ff]">MACD: 1.27</span>
            </div>
          </div>
          <BottomRows />
        </div>
        <InfoPanel />
        <Toolbar />
      </div>
      <StatusBar />
      <ImeBar />
    </div>
  );
}
